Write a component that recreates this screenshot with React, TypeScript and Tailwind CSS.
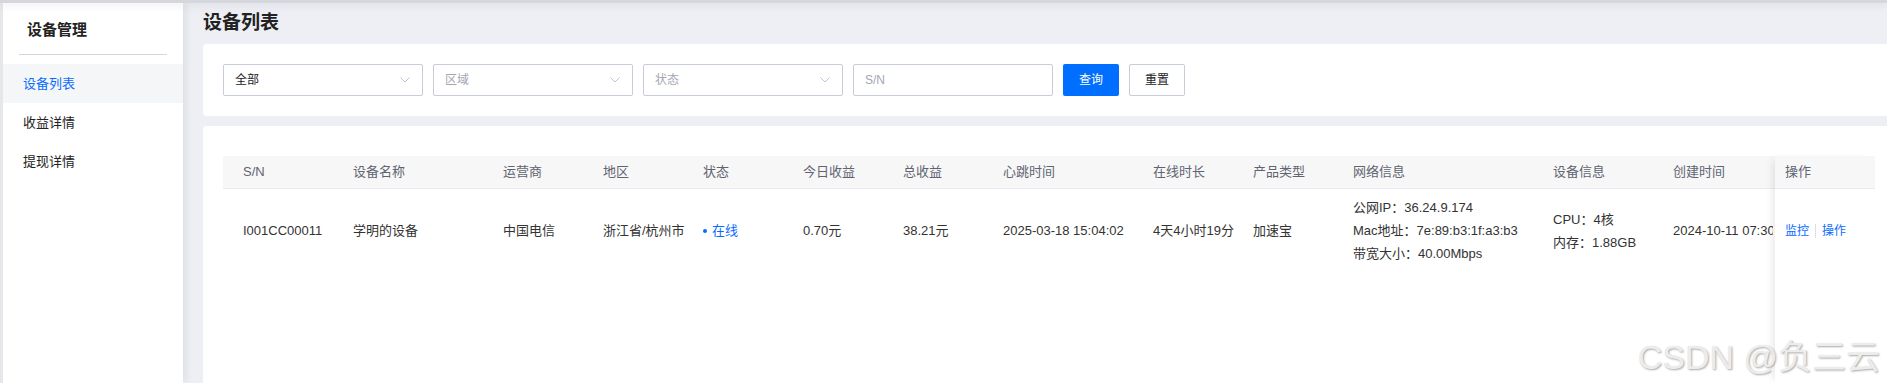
import React from "react"

interface Column {
    title: string,
    width: string,
}

const columns: Column[] = [
    { title: "S/N", width: "w-[110px]" },
    { title: "设备名称", width: "w-[150px]" },
    { title: "运营商", width: "w-[100px]" },
    { title: "地区", width: "w-[100px]" },
    { title: "状态", width: "w-[100px]" },
    { title: "今日收益", width: "w-[100px]" },
    { title: "总收益", width: "w-[100px]" },
    { title: "心跳时间", width: "w-[150px]" },
    { title: "在线时长", width: "w-[100px]" },
    { title: "产品类型", width: "w-[100px]" },
    { title: "网络信息", width: "w-[200px]" },
    { title: "设备信息", width: "w-[120px]" },
    { title: "创建时间", width: "w-[180px]" },
]

const Chevron = () => (
    <svg width="10" height="6" viewBox="0 0 10 6" fill="none">
        <polyline points="0.5,0.5 5,5 9.5,0.5" stroke="#c0c4cc" strokeWidth="1" />
    </svg>
)

const Select = ({ value, placeholder }: { value?: string, placeholder?: string }) => (
    <div className="flex w-[200px] h-[32px] items-center justify-between border border-[#c7ccd8] rounded-[2px] bg-white pl-[11px] pr-[12px] text-[12px]">
        {value ? <span className="text-[#222]">{value}</span> : <span className="text-[#a3a7b0]">{placeholder}</span>}
        <Chevron />
    </div>
)

const Sidebar = () => {
    const items = ["设备列表", "收益详情", "提现详情"]
    return (
        <div className="flex flex-col w-[183px] shrink-0 bg-white border-l-[3px] border-[#e6e7ea] shadow-[3px_0_8px_rgba(0,0,0,0.07)] z-[5]">
            <div className="flex h-[51px] items-center pl-[24px] pt-[3px] text-[15px] font-bold text-[#222]">设备管理</div>
            <div className="mx-[16px] h-[1px] bg-[#d3d7df]" />
            <div className="flex flex-col mt-[9px]">
                {items.map((item, i) => (
                    <div key={item} className={`flex h-[39px] items-center pl-[20px] text-[13px] ${i === 0 ? "bg-[#f5f6f8] text-[#0a6cff]" : "text-[#222]"}`}>
                        {item}
                    </div>
                ))}
            </div>
        </div>
    )
}

const Cell = ({ width, children }: { width: string, children: React.ReactNode }) => (
    <div className={`flex flex-col justify-center shrink-0 ${width} pl-[20px] whitespace-nowrap`}>{children}</div>
)

const DeviceTable = () => (
    <div className="flex flex-1 bg-white rounded-t-[4px] pt-[30px] pl-[20px] pr-[20px]">
        <div className="flex w-full">
            <div className="flex flex-col flex-1 overflow-hidden">
                <div className="flex h-[33px] bg-[#f7f7f8] border-b border-[#e8ebf2] text-[13px] text-[#5f6470]">
                    {columns.map((col) => (
                        <Cell key={col.title} width={col.width}>{col.title}</Cell>
                    ))}
                </div>
                <div className="flex h-[83px] text-[13px] text-[#333] leading-[23px]">
                    <Cell width="w-[110px]">I001CC00011</Cell>
                    <Cell width="w-[150px]">学明的设备</Cell>
                    <Cell width="w-[100px]">中国电信</Cell>
                    <Cell width="w-[100px]">浙江省/杭州市</Cell>
                    <Cell width="w-[100px]">
                        <div className="flex items-center text-[#0a6cff]">
                            <span className="w-[4px] h-[4px] rounded-full bg-[#0a6cff] mr-[5px]" />
                            在线
                        </div>
                    </Cell>
                    <Cell width="w-[100px]">0.70元</Cell>
                    <Cell width="w-[100px]">38.21元</Cell>
                    <Cell width="w-[150px]">2025-03-18 15:04:02</Cell>
                    <Cell width="w-[100px]">4天4小时19分</Cell>
                    <Cell width="w-[100px]">加速宝</Cell>
                    <Cell width="w-[200px]">
                        <div>公网IP：36.24.9.174</div>
                        <div>Mac地址：7e:89:b3:1f:a3:b3</div>
                        <div>带宽大小：40.00Mbps</div>
                    </Cell>
                    <Cell width="w-[120px]">
                        <div>CPU：4核</div>
                        <div>内存：1.88GB</div>
                    </Cell>
                    <Cell width="w-[120px]">
                        <div className="w-[100px] overflow-hidden">2024-10-11 07:30:02</div>
                    </Cell>
                </div>
            </div>
            <div className="flex flex-col w-[100px] shrink-0 bg-white shadow-[-6px_0_8px_-4px_rgba(0,0,0,0.1)] text-[12px]">
                <div className="flex h-[33px] items-center pl-[10px] bg-[#f7f7f8] border-b border-[#e8ebf2] text-[13px] text-[#5f6470]">操作</div>
                <div className="flex h-[83px] items-center pl-[10px] text-[#0a6cff]">
                    <span>监控</span>
                    <span className="w-[1px] h-[14px] bg-[#dcdfe6] mx-[6px]" />
                    <span>操作</span>
                </div>
            </div>
        </div>
    </div>
)

const App = () => {
    return (
        <div className="relative flex flex-col w-[1887px] h-[383px] overflow-hidden bg-[#eeeff4] font-['Liberation_Sans','Noto_Sans_CJK_SC',sans-serif]">
            <div className="h-[3px] shrink-0 bg-[#d6d7dc] shadow-[0_2px_8px_rgba(0,0,0,0.12)] z-10" />
            <div className="flex flex-1 min-h-0">
                <Sidebar />
                <div className="flex flex-col w-[1712px] shrink-0 pl-[20px]">
                    <div className="flex h-[41px] items-center text-[19px] font-bold text-[#222]">设备列表</div>
                    <div className="flex items-center gap-[10px] bg-white rounded-[4px] p-[20px]">
                        <Select value="全部" />
                        <Select placeholder="区域" />
                        <Select placeholder="状态" />
                        <div className="flex w-[200px] h-[32px] items-center border border-[#c7ccd8] rounded-[2px] pl-[11px] text-[12px] text-[#a3a7b0]">S/N</div>
                        <button className="w-[56px] h-[32px] rounded-[2px] bg-[#006eff] text-white text-[12px]">查询</button>
                        <button className="w-[56px] h-[32px] rounded-[2px] bg-white border border-[#c7ccd8] text-[#222] text-[12px]">重置</button>
                    </div>
                    <div className="flex flex-col flex-1 mt-[10px]">
                        <DeviceTable />
                    </div>
                </div>
            </div>
            <div className="absolute right-[7px] bottom-[6px] text-[34px] leading-[40px] text-[#ececec] [text-shadow:1px_1px_2px_rgba(0,0,0,0.35)] pointer-events-none">
                CSDN @负三云
            </div>
        </div>
    )
}

export default App
